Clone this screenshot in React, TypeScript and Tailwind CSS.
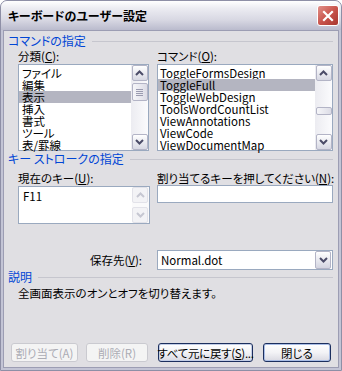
import React from 'react'

const categories = ['ファイル', '編集', '表示', '挿入', '書式', 'ツール', '表/罫線']
const commands = [
  'ToggleFormsDesign',
  'ToggleFull',
  'ToggleWebDesign',
  'ToolsWordCountList',
  'ViewAnnotations',
  'ViewCode',
  'ViewDocumentMap',
]

function Chevron({ up, disabled }: { up?: boolean; disabled?: boolean }) {
  return (
    <svg width="9" height="6" viewBox="0 0 9 6">
      <polyline
        points={up ? '1,5 4.5,1.5 8,5' : '1,1 4.5,4.5 8,1'}
        fill="none"
        stroke={disabled ? '#c6c7d2' : '#4b4c68'}
        strokeWidth="2"
      />
    </svg>
  )
}

function ScrollButton({ up, disabled }: { up?: boolean; disabled?: boolean }) {
  return (
    <div
      className={
        disabled
          ? 'w-[16px] h-[16px] rounded-[2px] border border-[#e2e2e9] bg-[#f3f3f6] flex items-center justify-center'
          : 'w-[16px] h-[16px] rounded-[2px] border border-[#b3b4c6] bg-gradient-to-b from-white to-[#d7d8e3] flex items-center justify-center'
      }
    >
      <Chevron up={up} disabled={disabled} />
    </div>
  )
}

function Scrollbar({ thumbTop, thumbHeight, grip }: { thumbTop: string; thumbHeight: string; grip?: boolean }) {
  return (
    <div className="w-[17px] h-full flex flex-col items-center bg-gradient-to-r from-[#ececf1] to-[#fbfbfd]">
      <ScrollButton up />
      <div className="flex-1 w-full flex flex-col items-center">
        <div
          className={`${thumbTop} ${thumbHeight} w-[16px] rounded-[2px] border border-[#b3b4c6] bg-gradient-to-r from-[#f6f6f9] to-[#dcdce6] flex flex-col items-center justify-center gap-[1px]`}
        >
          {grip && (
            <>
              <div className="w-[7px] h-px bg-[#9a9bb0]" />
              <div className="w-[7px] h-px bg-[#9a9bb0]" />
              <div className="w-[7px] h-px bg-[#9a9bb0]" />
              <div className="w-[7px] h-px bg-[#9a9bb0]" />
            </>
          )}
        </div>
      </div>
      <ScrollButton />
    </div>
  )
}

function GroupHeader({ title }: { title: string }) {
  return (
    <div className="h-[14px] flex items-center pl-[4px] pr-[5px]">
      <span className="text-[#0046d5] text-[12px] leading-[14px]">{title}</span>
      <div className="flex-1 h-px bg-[#c6c6ce] ml-[6px]" />
    </div>
  )
}

function Button({ children, disabled, def, width }: { children: React.ReactNode; disabled?: boolean; def?: boolean; width: string }) {
  if (disabled) {
    return (
      <div className={`${width} h-[19px] rounded-[3px] border border-[#cacad0] bg-[#f4f4f4] text-[#acacb4] flex items-center justify-center leading-[12px]`}>
        {children}
      </div>
    )
  }
  return (
    <div
      className={`${width} h-[19px] rounded-[3px] border border-[#1c2f5e] bg-gradient-to-b from-white via-[#f3f3f6] to-[#d9d9e2] flex items-center justify-center leading-[12px] whitespace-nowrap ${def ? 'shadow-[inset_0_0_0_1px_#a9bde6]' : 'shadow-[inset_0_0_0_1px_#c2cde6]'}`}
    >
      {children}
    </div>
  )
}

export default function App() {
  return (
    <div className="w-[342px] h-[371px] font-['Noto_Sans_CJK_JP','Noto_Sans',sans-serif] [font-feature-settings:'palt'] text-[11.5px] text-black">
      <div className="w-full h-full flex flex-col border border-[#8e8fa6] rounded-t-[7px] overflow-hidden bg-[#c3c4d5]">
        {/* title bar */}
        <div className="h-[29px] shrink-0 flex items-center justify-between pl-[7px] pr-[2px] bg-[linear-gradient(to_bottom,#ffffff_0%,#ececf2_25%,#d8d8e3_65%,#babbcd_100%)]">
          <span className="font-bold text-[12px] leading-[14px] mt-[1px]">キーボードのユーザー設定</span>
          <div className="w-[22px] h-[21px] rounded-[3px] border border-white bg-gradient-to-br from-[#e0908a] via-[#c9544c] to-[#a8362f] flex items-center justify-center">
            <svg width="12" height="12" viewBox="0 0 12 12">
              <path d="M2 2 L10 10 M10 2 L2 10" stroke="white" strokeWidth="2.2" strokeLinecap="square" />
            </svg>
          </div>
        </div>

        {/* body */}
        <div className="flex-1 px-[2px] pb-[2px]">
          <div className="w-full h-full border border-[#9c9db3] bg-[#e0dfe3] flex flex-col">
            <div className="mt-[3px]">
              <GroupHeader title="コマンドの指定" />
            </div>

            <div className="mt-[2px] h-[12px] flex leading-[12px]">
              <div className="ml-[14px] w-[139px]">
                分類(<u>C</u>):
              </div>
              <div>
                コマンド(<u>O</u>):
              </div>
            </div>

            <div className="mt-[2px] h-[87px] flex">
              <div className="ml-[14px] w-[131px] h-full border border-[#9aa9bf] bg-white flex">
                <div className="flex-1 flex flex-col pt-[2px]">
                  {categories.map((c) => (
                    <div
                      key={c}
                      className={`h-[12px] leading-[12px] pl-[3px] ${c === '表示' ? 'bg-[#b4b5c1]' : ''}`}
                    >
                      {c}
                    </div>
                  ))}
                </div>
                <Scrollbar thumbTop="mt-[2px]" thumbHeight="h-[18px]" grip />
              </div>
              <div className="ml-[8px] w-[176px] h-full border border-[#9aa9bf] bg-white flex">
                <div className="flex-1 flex flex-col pt-[2px]">
                  {commands.map((c) => (
                    <div
                      key={c}
                      className={`h-[12px] leading-[12px] pl-[2px] ${c === 'ToggleFull' ? 'bg-[#b4b5c1]' : ''}`}
                    >
                      {c}
                    </div>
                  ))}
                </div>
                <Scrollbar thumbTop="mt-[26px]" thumbHeight="h-[8px]" />
              </div>
            </div>

            <div className="mt-[1px]">
              <GroupHeader title="キー ストロークの指定" />
            </div>

            <div className="mt-[6px] h-[12px] flex leading-[12px] whitespace-nowrap">
              <div className="ml-[14px] w-[139px]">
                現在のキー(<u>U</u>):
              </div>
              <div>
                割り当てるキーを押してください(<u>N</u>):
              </div>
            </div>

            <div className="mt-[1px] flex items-start">
              <div className="ml-[14px] mt-[1px] w-[132px] h-[38px] border border-[#9aa9bf] bg-white flex">
                <div className="flex-1 pl-[4px] pt-[3px] leading-[12px]">F11</div>
                <div className="w-[17px] h-full flex flex-col justify-between bg-[#fafafb]">
                  <ScrollButton up disabled />
                  <ScrollButton disabled />
                </div>
              </div>
              <div className="ml-[7px] w-[176px] h-[18px] border border-[#9aa9bf] bg-white" />
            </div>

            <div className="mt-[26px] h-[20px] flex items-center">
              <div className="w-[153px] text-right pr-[15px] leading-[12px]">
                保存先(<u>V</u>):
              </div>
              <div className="w-[176px] h-full border border-[#9aa9bf] bg-white flex items-center">
                <div className="flex-1 pl-[3px] leading-[12px]">Normal.dot</div>
                <div className="w-[16px] h-[18px] mr-px rounded-[2px] border border-[#b3b4c6] bg-gradient-to-b from-white to-[#d3d4e0] flex items-center justify-center">
                  <Chevron />
                </div>
              </div>
            </div>

            <GroupHeader title="説明" />

            <div className="mt-[3px] pl-[14px] h-[12px] leading-[12px]">全画面表示のオンとオフを切り替えます。</div>

            <div className="mt-auto mb-[5px] pl-[7px] flex">
              <Button disabled width="w-[67px]">割り当て(A)</Button>
              <div className="ml-[8px]">
                <Button disabled width="w-[62px]">削除(R)</Button>
              </div>
              <div className="ml-[10px]">
                <Button width="w-[95px]">
                  <span className="tracking-[-0.3px]">
                    すべて元に戻す(<u>S</u>)...
                  </span>
                </Button>
              </div>
              <div className="ml-[10px]">
                <Button def width="w-[68px]">閉じる</Button>
              </div>
            </div>
          </div>
        </div>
      </div>
    </div>
  )
}
